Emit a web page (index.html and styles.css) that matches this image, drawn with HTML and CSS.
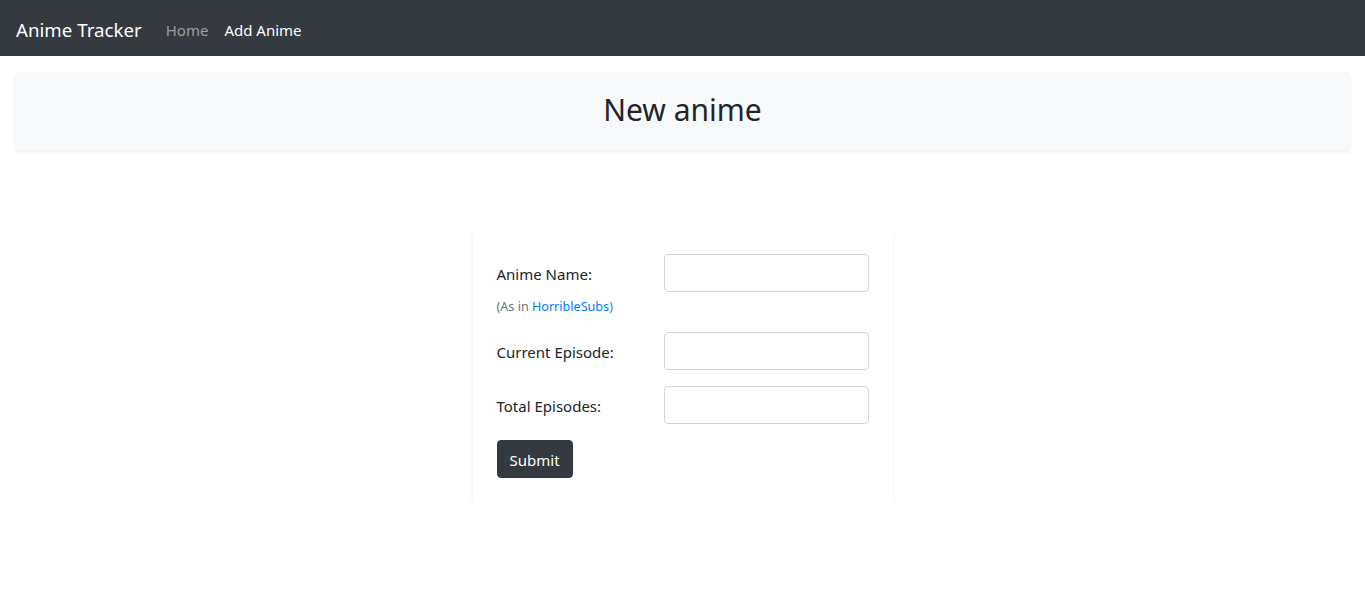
FILE: index.html
```html
<!DOCTYPE html>
<html lang="en">
<head>
<meta charset="utf-8">
<title>Anime Tracker</title>
<link rel="stylesheet" href="styles.css">
</head>
<body>
<nav class="navbar">
  <a class="brand" href="#">Anime Tracker</a>
  <ul class="nav">
    <li><a class="nav-link muted" href="#">Home</a></li>
    <li><a class="nav-link active" href="#">Add Anime</a></li>
  </ul>
</nav>
<div class="container">
  <header class="header">
    <h1 class="title">New anime</h1>
  </header>
  <form class="card">
    <div class="form-group">
      <div class="col-label">
        <label class="label" for="name">Anime Name:</label>
        <small class="help">(As in <a href="#">HorribleSubs</a>)</small>
      </div>
      <div class="col-input"><input class="input" id="name" type="text"></div>
    </div>
    <div class="form-group">
      <div class="col-label"><label class="label" for="cur">Current Episode:</label></div>
      <div class="col-input"><input class="input" id="cur" type="text"></div>
    </div>
    <div class="form-group">
      <div class="col-label"><label class="label" for="tot">Total Episodes:</label></div>
      <div class="col-input"><input class="input" id="tot" type="text"></div>
    </div>
    <button class="btn" type="submit">Submit</button>
  </form>
</div>
</body>
</html>
```
FILE: styles.css
```css
* { box-sizing: border-box; }
html, body { margin: 0; padding: 0; }
body {
  font-family: "Noto Sans", "Open Sans", sans-serif;
  font-size: 15px;
  line-height: 24px;
  color: #212529;
  background: #fff;
}
a { text-decoration: none; }
.navbar {
  display: flex;
  align-items: center;
  height: 56px;
  padding: 10px 16px 6px;
  background: #343a40;
}
.brand {
  color: #fff;
  font-size: 18.7px;
  line-height: 30px;
  margin-right: 16px;
}
.nav {
  display: flex;
  list-style: none;
  margin: 0;
  padding: 0;
}
.nav-link {
  display: block;
  padding: 8px;
  font-size: 15px;
  line-height: 24px;
}
.nav-link.muted { color: rgba(255,255,255,.5); }
.nav-link.active { color: #fff; }
.container {
  padding: 16px 15px 0;
}
.header {
  background: #f8f9fa;
  border-radius: 4px;
  box-shadow: 0 2px 4px rgba(0,0,0,.075);
  padding: 19px 16px 13px;
  text-align: center;
}
.title {
  margin: 0 0 8px;
  font-size: 30px;
  font-weight: 400;
  line-height: 38px;
}
.card {
  width: 420px;
  margin: 80px auto 0;
  background: #fff;
  border-radius: 4px;
  box-shadow: 0 2px 4px rgba(0,0,0,.075);
  padding: 24px;
}
.form-group {
  display: flex;
  margin-bottom: 16px;
}
.col-label {
  width: 167px;
  padding-right: 15px;
  display: flex;
  flex-direction: column;
}
.label {
  padding: 8px 0 6px;
  line-height: 24px;
}
.help {
  margin-top: 5px;
  font-size: 12.6px;
  line-height: 19px;
  color: #6c757d;
}
.help a { color: #007bff; }
.col-input { width: 205px; }
.input {
  display: block;
  width: 100%;
  height: 38px;
  padding: 6px 12px;
  font: inherit;
  color: #495057;
  border: 1px solid #ced4da;
  border-radius: 4px;
  background: #fff;
}
.btn {
  display: block;
  height: 38px;
  padding: 7px 12px 5px;
  font: inherit;
  line-height: 24px;
  color: #fff;
  background: #343a40;
  border: 1px solid #343a40;
  border-radius: 4px;
}
```
